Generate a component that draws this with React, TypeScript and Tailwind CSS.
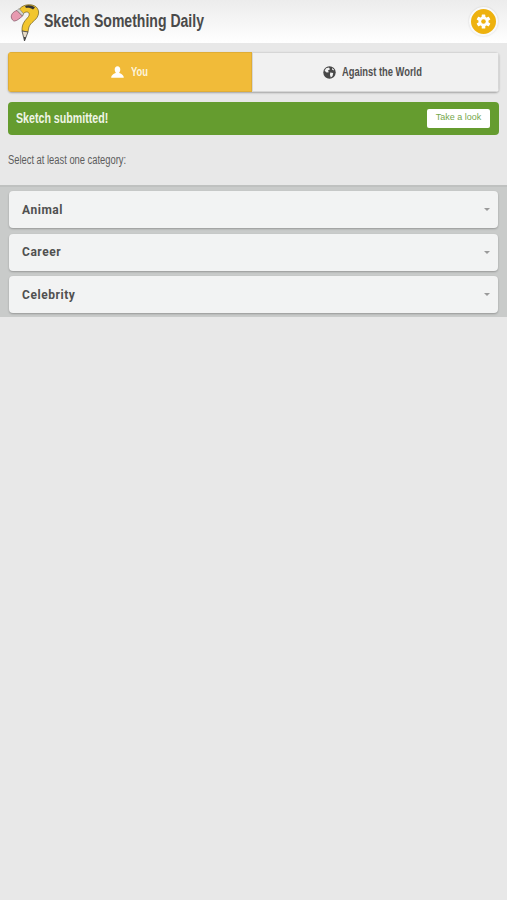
const sans = { fontFamily: '"Liberation Sans", Arial, sans-serif' };

function Logo() {
  return (
    <svg width="30" height="38" viewBox="0 0 30 38" className="shrink-0">
      <path d="M8 9 C10 3 16 1 22 2 C29 3.500 30 10 27 14.500 C24 19 19.500 20 18.500 26 L18 29 L12 28 C11.500 20 16 17 18.500 13.500 C20 11 19 9 16.500 9 C14 9 13 11 12.500 13 Z" fill="#f2c62e" stroke="#6b5a20" strokeWidth="0.7" />
      <path d="M12 28 L18 29 L14.500 38 Z" fill="#e8dcc8" stroke="#444" strokeWidth="0.8" />
      <path d="M14 34 L16 34.300 L14.500 38 Z" fill="#333" />
      <path d="M1.500 15 C0.500 12 3 8.500 7 7.500 L12.500 13 C10 15 7 18 4.500 18 C3 18 2 16.500 1.500 15 Z" fill="#e79ab0" stroke="#7a5060" strokeWidth="0.7" />
      <path d="M7 7.500 L12.500 13 L13.500 10.500 L9 5.500 Z" fill="#d4d4d4" stroke="#666" strokeWidth="0.5" />
      <path d="M15 3 C18 1.500 22 2 25 4.500 L23 6.500 C21 5 18 4.500 16 5 Z" fill="#333" />
    </svg>
  );
}

function Globe() {
  return (
    <svg width="13" height="13" viewBox="0 0 13 13" className="shrink-0">
      <circle cx="6.500" cy="6.500" r="6.200" fill="#484848" />
      <path d="M3 2.200 L6 1.500 L7 3.200 L5 4.600 L5.800 6.200 L3.600 6.600 L1.600 4.800 Z M7.200 6.600 L10.200 7 L9.600 10 L7.800 11.600 L7 9 Z M9 2 L11 3.400 L10.600 4.600 L9 3.600 Z" fill="#f1f1f1" />
    </svg>
  );
}

function Person() {
  return (
    <svg width="13" height="12" viewBox="0 0 13 12" className="shrink-0">
      <path d="M6.500 0.300 C8.300 0.300 9.300 1.700 9.300 3.400 C9.300 4.900 8.600 6 8 6.600 C8.300 7.600 12.700 8 12.800 11.700 L0.200 11.700 C0.300 8 4.700 7.600 5 6.600 C4.400 6 3.700 4.900 3.700 3.400 C3.700 1.700 4.700 0.300 6.500 0.300 Z" fill="#ffffff" />
    </svg>
  );
}

function Gear() {
  return (
    <svg width="15" height="15" viewBox="0 0 15 15">
      <g fill="#ffffff">
        <rect x="5.700" y="0.500" width="3.600" height="14" rx="0.600" />
        <rect x="5.700" y="0.500" width="3.600" height="14" rx="0.600" transform="rotate(60 7.500 7.500)" />
        <rect x="5.700" y="0.500" width="3.600" height="14" rx="0.600" transform="rotate(120 7.500 7.500)" />
        <circle cx="7.500" cy="7.500" r="5" />
      </g>
      <circle cx="7.500" cy="7.500" r="2.300" fill="#eeb20f" />
    </svg>
  );
}

function Row({ label }: { label: string }) {
  return (
    <div className="flex h-[37px] items-center justify-between rounded-[4px] bg-[#f2f3f3] pl-[13px] pr-[8px] shadow-[0_1px_2px_rgba(0,0,0,0.25)]">
      <span className="text-[12px] font-bold tracking-[0.55px] text-[#505050]" style={{ fontFamily: "Roboto, sans-serif" }}>
        {label}
      </span>
      <span className="h-0 w-0 border-x-[3px] border-t-[3px] border-x-transparent border-t-[#9a9a9a]" />
    </div>
  );
}

export default function App() {
  return (
    <div className="flex min-h-[900px] flex-col bg-[#e8e8e8]" style={sans}>
      <header className="flex h-[43px] items-center justify-between bg-gradient-to-b from-[#ececec] to-[#ffffff] pl-[10px] pr-[9px]">
        <div className="flex items-center gap-[4px]">
          <Logo />
          <span className="inline-block w-[160px] origin-left scale-x-[0.78] whitespace-nowrap text-[18px] font-bold text-[#4a4a4a]">Sketch Something Daily</span>
        </div>
        <div className="flex h-[29px] w-[29px] items-center justify-center rounded-full border-2 border-[#fafafa] bg-[#eeb20f] shadow-[0_0_2px_rgba(0,0,0,0.15)]">
          <Gear />
        </div>
      </header>

      <div className="mx-[8px] mt-[9px] flex h-[40px] overflow-hidden rounded-[4px] shadow-[0_1px_2px_rgba(0,0,0,0.3)]">
        <div className="flex w-[244px] items-center justify-center gap-[7px] border border-[#e0ad35] bg-[#f1bb39] pr-[3px] text-[12px] font-bold text-[#fdf4dc]">
          <Person />
          <span className="inline-block w-[16px] origin-left scale-x-[0.78] whitespace-nowrap">You</span>
        </div>
        <div className="flex flex-1 items-center justify-center gap-[6px] border border-[#d6d6d6] bg-[#f1f1f1] pr-[6px] text-[12px] font-bold text-[#505050]">
          <Globe />
          <span className="inline-block w-[80px] origin-left scale-x-[0.78] whitespace-nowrap">Against the World</span>
        </div>
      </div>

      <div className="mx-[8px] mt-[10px] flex h-[33px] items-center justify-between rounded-[4px] bg-[#659c2f] pb-[1px] pl-[8px] pr-[9px]">
        <span className="inline-block w-[92px] origin-left scale-x-[0.76] whitespace-nowrap text-[14px] font-bold text-[#f0f5e6]">Sketch submitted!</span>
        <button className="h-[19px] w-[63px] rounded-[2px] bg-white text-[9px] text-[#76a84c]">
          Take a look
        </button>
      </div>

      <p className="mx-[8px] mt-[17px] h-[33px] origin-left scale-x-[0.78] whitespace-nowrap text-[12px] leading-[16px] text-[#5c5c5c]">Select at least one category:</p>

      <section className="flex flex-col gap-[5.5px] border-t-2 border-[#bfc1c0] bg-[#c9cbca] px-[9px] pb-[4px] pt-[4px]">
        <Row label="Animal" />
        <Row label="Career" />
        <Row label="Celebrity" />
      </section>
    </div>
  );
}
